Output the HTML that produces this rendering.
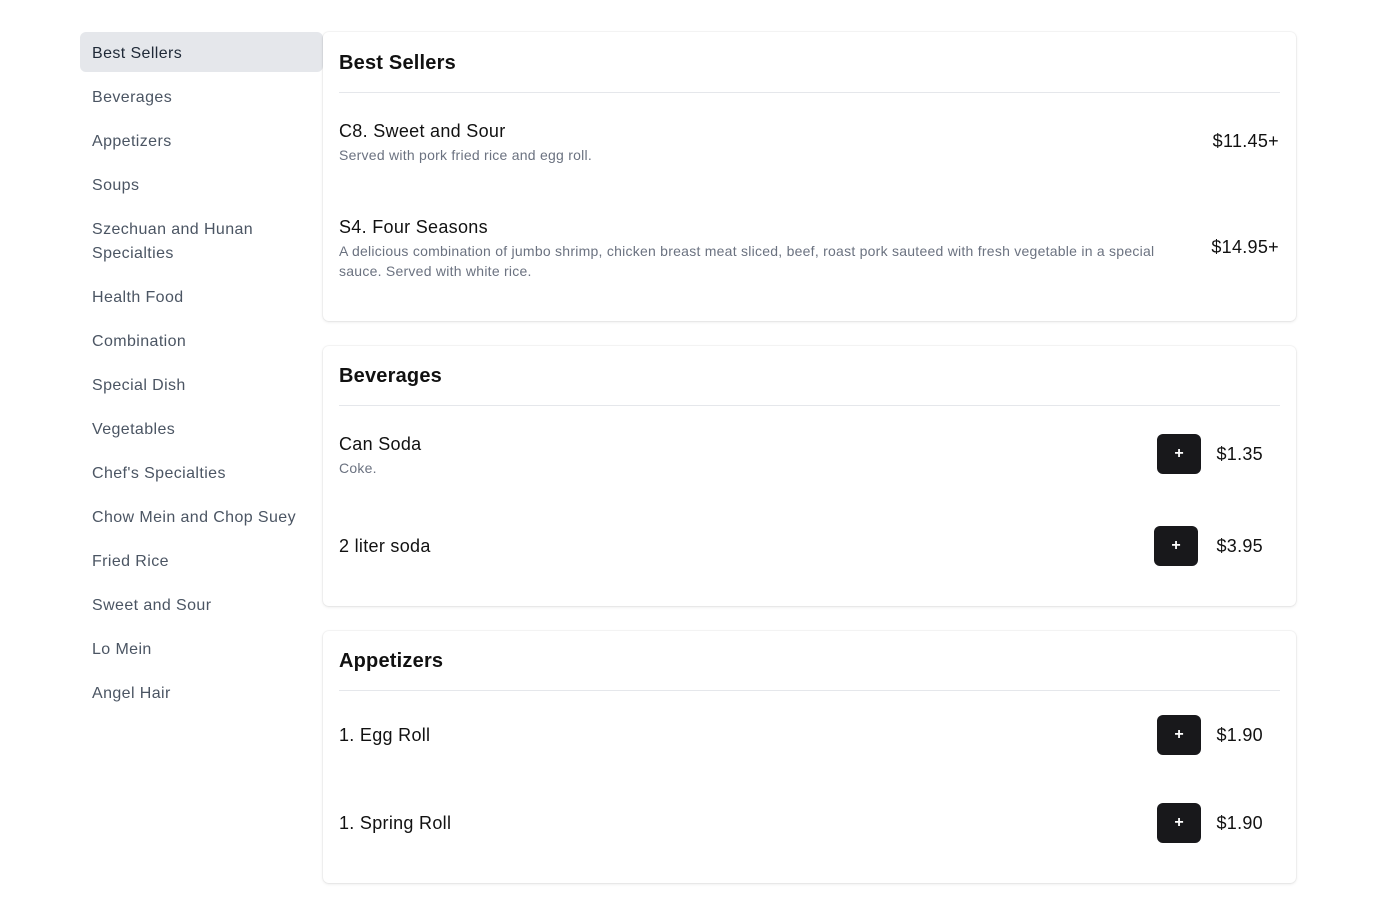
<!DOCTYPE html>
<html><head><meta charset="utf-8"><style>
*{margin:0;padding:0;box-sizing:border-box}
body{width:1376px;height:915px;background:#fff;font-family:"Liberation Sans",sans-serif;position:relative;overflow:hidden;color:#111}
.side{position:absolute;left:92px;font-size:16px;color:#4b5563;line-height:24px;letter-spacing:0.4px;white-space:nowrap}
.sel{position:absolute;left:80px;top:32px;width:243px;height:40px;background:#e5e7eb;border-radius:6px}
.card{position:absolute;left:323px;width:973px;background:#fff;border-radius:6px;box-shadow:0 1px 3px rgba(0,0,0,.1),0 0 0 1px rgba(0,0,0,.03)}
.h{position:absolute;left:16px;font-size:20px;font-weight:bold;color:#111;letter-spacing:0.2px}
.hr{position:absolute;left:16px;right:16px;height:1px;background:#e5e7eb}
.t{position:absolute;left:16px;font-size:18px;color:#111;white-space:nowrap;letter-spacing:0.3px}
.d{position:absolute;left:16px;font-size:14px;color:#6b7280;line-height:20px;letter-spacing:0.25px}
.p{position:absolute;font-size:18px;color:#111;white-space:nowrap;letter-spacing:0.3px}
.b{position:absolute;width:44px;height:40px;background:#18181b;border-radius:6px;color:#fff;font-size:16px;font-weight:bold;text-align:center;line-height:40px}
</style></head><body>
<div class="sel"></div>
<div class="side" style="top:42px;color:#1f2937">Best Sellers</div>
<div class="side" style="top:86px">Beverages</div>
<div class="side" style="top:130px">Appetizers</div>
<div class="side" style="top:174px">Soups</div>
<div class="side" style="top:218px">Szechuan and Hunan<br>Specialties</div>
<div class="side" style="top:286px">Health Food</div>
<div class="side" style="top:330px">Combination</div>
<div class="side" style="top:374px">Special Dish</div>
<div class="side" style="top:418px">Vegetables</div>
<div class="side" style="top:462px">Chef's Specialties</div>
<div class="side" style="top:506px">Chow Mein and Chop Suey</div>
<div class="side" style="top:550px">Fried Rice</div>
<div class="side" style="top:594px">Sweet and Sour</div>
<div class="side" style="top:638px">Lo Mein</div>
<div class="side" style="top:682px">Angel Hair</div>

<div class="card" style="top:32px;height:289px">
<div class="h" style="top:20px">Best Sellers</div>
<div class="hr" style="top:60px"></div>
<div class="t" style="top:89px">C8. Sweet and Sour</div>
<div class="d" style="top:113px">Served with pork fried rice and egg roll.</div>
<div class="p" style="right:17px;top:99px">$11.45+</div>
<div class="t" style="top:185px">S4. Four Seasons</div>
<div class="d" style="top:209px;width:845px;white-space:normal">A delicious combination of jumbo shrimp, chicken breast meat sliced, beef, roast pork sauteed with fresh vegetable in a special sauce. Served with white rice.</div>
<div class="p" style="right:17px;top:205px">$14.95+</div>
</div>

<div class="card" style="top:346px;height:260px">
<div class="h" style="top:19px">Beverages</div>
<div class="hr" style="top:59px"></div>
<div class="t" style="top:88px">Can Soda</div>
<div class="d" style="top:112px">Coke.</div>
<div class="b" style="left:834px;top:88px">+</div>
<div class="p" style="right:33px;top:98px">$1.35</div>
<div class="t" style="top:190px">2 liter soda</div>
<div class="b" style="left:831px;top:180px">+</div>
<div class="p" style="right:33px;top:190px">$3.95</div>
</div>

<div class="card" style="top:631px;height:252px">
<div class="h" style="top:19px">Appetizers</div>
<div class="hr" style="top:59px"></div>
<div class="t" style="top:94px">1. Egg Roll</div>
<div class="b" style="left:834px;top:84px">+</div>
<div class="p" style="right:33px;top:94px">$1.90</div>
<div class="t" style="top:182px">1. Spring Roll</div>
<div class="b" style="left:834px;top:172px">+</div>
<div class="p" style="right:33px;top:182px">$1.90</div>
</div>
</body></html>
